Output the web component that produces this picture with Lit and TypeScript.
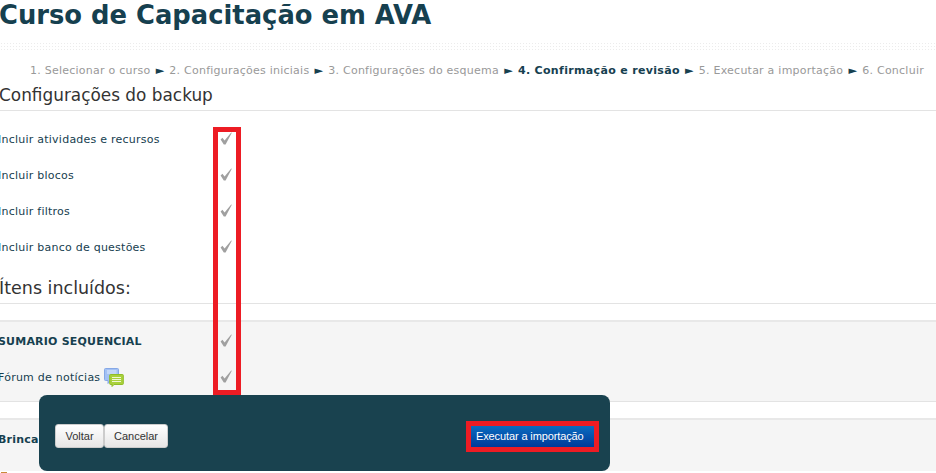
import { LitElement, html, css, svg } from "lit";
import { customElement } from "lit/decorators.js";

const check = html`<svg class="chk" width="16" height="16" viewBox="0 0 16 16"><path d="M2.6 8.4 L4.4 6.8 L6.6 9.4 L13.2 1.4 L13.8 1.8 L7.6 13.6 L5.8 13.6 Z" fill="#a0a0a0"/></svg>`;

const forum = html`<svg class="forum" width="20" height="19" viewBox="0 0 20 19">
  ${svg`<path d="M1.5 .5h12a1 1 0 0 1 1 1v10a1 1 0 0 1-1 1H6l-2 3v-3H1.5a1 1 0 0 1-1-1v-10a1 1 0 0 1 1-1z" fill="#a3c1f4" stroke="#86a8e6"/>
  <path d="M3 3h9.500M3 5h9.500" stroke="#e2ecfc" stroke-width="1"/>
  <path d="M6.500 6.500h12a.8.8 0 0 1 .8.8v8.400a.8.8 0 0 1-.8.8H10l-2 2v-2H6.500a.8.8 0 0 1-.8-.8V7.300a.8.8 0 0 1 .8-.8z" fill="#a9d13c" stroke="#90bd28"/>
  <path d="M8 9.500h9M8 11.500h9M8 13.500h9" stroke="#f0f7d4" stroke-width="1"/>`}
</svg>`;

@customElement("app-root")
export class AppRoot extends LitElement {
  static styles = css`
    :host { display: block; position: relative; width: 936px; height: 473px; overflow: hidden; background: #fff;
      font-family: "DejaVu Sans", Verdana, sans-serif; color: #16404f; font-size: 11px; }
    h1 { margin: 0 0 0 -1px; font-size: 25.8px; line-height: 30px; height: 42px; font-weight: 700; color: #16404f; }
    .dots { height: 8px; background-image: radial-gradient(#ececec 0.6px, transparent 0.9px); background-size: 3px 3px; }
    .steps { margin-top: 14px; height: 21px; line-height: 14px; padding-left: 30px; font-size: 11px; letter-spacing: .24px; color: #999; white-space: nowrap; }
    .steps b { color: #16404f; font-weight: 700; letter-spacing: .33px; }
    .steps i { font-style: normal; color: #16404f; font-size: 11px; margin: 0 1.5px; letter-spacing: 0; }
    h2 { margin: 0 0 0 -1px; font-weight: 400; color: #333; font-size: 16.900px; line-height: 20px; height: 25px; }
    h3 { margin: 0 0 0 -1px; font-weight: 400; color: #333; font-size: 17.500px; line-height: 24px; }
    .rule { border-bottom: 1px solid #e3e3e3; }
    .rows { padding-top: 10px; }
    .row { display: flex; align-items: center; height: 36px; }
    .lbl { width: 220px; margin-left: -2px; letter-spacing: .24px; }
    .chk { display: block; }
    .head { height: 27px; padding-top: 11px; }
    .sec { margin-top: 16px; background: #f5f5f5; border-top: 2px solid #e8e8e8; padding: 1px 0 6px; border-bottom: 1px solid #e3e3e3; }
    .strong { font-weight: 700; letter-spacing: .2px; }
    .forum { vertical-align: middle; margin-left: 0; }
    .frame { position: absolute; left: 213px; top: 127px; width: 28px; height: 268px; box-sizing: border-box; border: 5px solid #ed1c24; }
    .panel { position: absolute; left: 39px; top: 395px; width: 571px; height: 76px; box-sizing: border-box; background: #19424f; border-radius: 8px; display: flex; align-items: center; justify-content: space-between; padding: 6px 11px 0 16px; }
    .btns { display: flex; margin-top: -1px; }
    button { font: 11px/14px "Liberation Sans", Arial, sans-serif; white-space: nowrap; }
    .plain { height: 24px; padding: 0 9px; min-width: 49px; color: #333; background: linear-gradient(#fff, #e6e6e6); border: 1px solid #ccc; border-radius: 3px; }
    .go-wrap { border: 5px solid #ed1c24; display: block; }
    .go { display: block; height: 21px; width: 123px; padding: 0 0 0 5px; text-align: left; color: #fff; border: 0; letter-spacing: -.12px; background: linear-gradient(#0a6cc0, #003a99); }
    .foot { margin-top: 16px; padding-bottom: 14px; border-bottom: 0; }
    .tail { display: flex; padding: 1px 0 0 1px; }
    .tail span { width: 6px; height: 2px; background: #c98a3a; }
  `;
  render() {
    return html`
      <h1>Curso de Capacitação em AVA</h1>
      <div class="dots"></div>
      <div class="steps">1. Selecionar o curso <i>►</i> 2. Configurações iniciais <i>►</i> 3. Configurações do esquema <i>►</i> <b>4. Confirmação e revisão</b> <i>►</i> 5. Executar a importação <i>►</i> 6. Concluir</div>
      <h2 class="rule">Configurações do backup</h2>
      <div class="rows">
        <div class="row"><div class="lbl">Incluir atividades e recursos</div>${check}</div>
        <div class="row"><div class="lbl">Incluir blocos</div>${check}</div>
        <div class="row"><div class="lbl">Incluir filtros</div>${check}</div>
        <div class="row"><div class="lbl">Incluir banco de questões</div>${check}</div>
      </div>
      <div class="head rule"><h3>Ítens incluídos:</h3></div>
      <div class="sec">
        <div class="row"><div class="lbl strong">SUMARIO SEQUENCIAL</div>${check}</div>
        <div class="row"><div class="lbl">Fórum de notícias ${forum}</div>${check}</div>
      </div>
      <div class="sec foot"><div class="row"><div class="lbl strong">Brinca</div></div></div>
      <div class="tail"><span></span></div>
      <div class="frame"></div>
      <div class="panel">
        <div class="btns"><button class="plain">Voltar</button><button class="plain">Cancelar</button></div>
        <span class="go-wrap"><button class="go">Executar a importação</button></span>
      </div>
    `;
  }
}
